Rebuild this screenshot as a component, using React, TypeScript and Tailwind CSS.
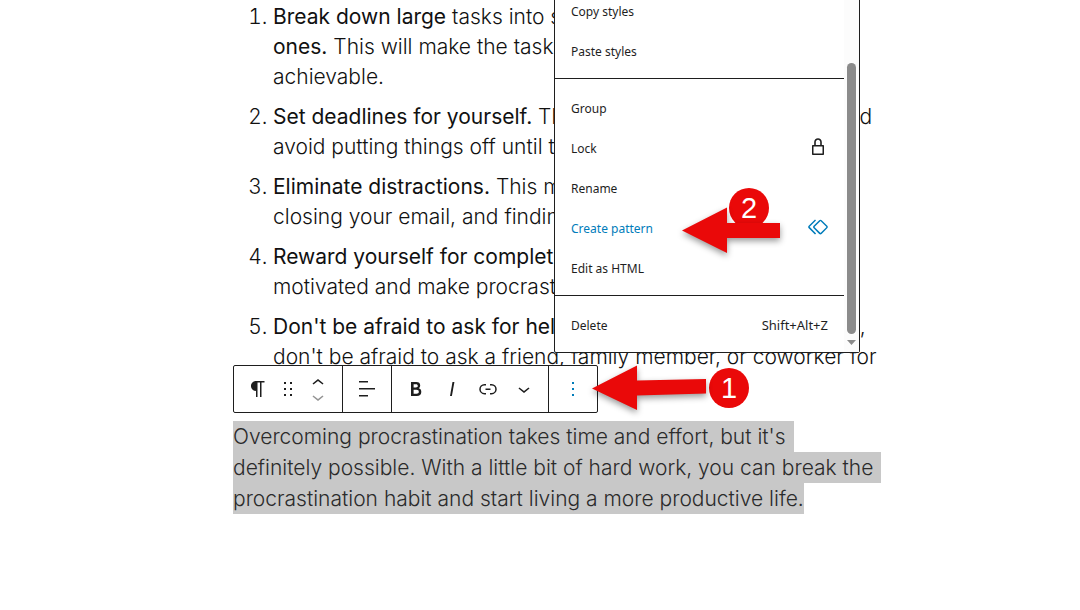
import React from "react";
import clsx from "clsx";

const icons = {
  paragraph:
    "m9.99609 14v-.2251l.00391.0001v6.225h1.5v-14.5h2.5v14.5h1.5v-14.5h3v-1.5h-8.50391c-2.76142 0-5 2.23858-5 5 0 2.7614 2.23858 5 5 5z",
  drag: "M8 7h2V5H8v2zm0 6h2v-2H8v2zm0 6h2v-2H8v2zm6-14v2h2V5h-2zm0 8h2v-2h-2v2zm0 6h2v-2h-2v2z",
  up: "M6.5 12.4L12 8l5.5 4.4-.9 1.2L12 10l-4.5 3.6-1-1.2z",
  down: "M17.5 11.6L12 16l-5.5-4.4.9-1.2L12 14l4.5-3.6 1 1.2z",
  align: "M13 5.5H4V4h9v1.5Zm7 7H4V11h16v1.5Zm-7 7H4V18h9v1.5Z",
  bold: "M14.7 11.3c1-.6 1.5-1.6 1.5-3 0-2.3-1.3-3.4-4-3.4H7v14h5.8c1.4 0 2.5-.3 3.3-1 .8-.7 1.2-1.7 1.2-2.9.1-1.9-.8-3.1-2.6-3.7zm-5.1-4h2.3c.6 0 1.1.1 1.4.4.3.3.5.7.5 1.2s-.2 1-.5 1.2c-.3.3-.8.4-1.4.4H9.6V7.3zm4.6 9c-.4.3-1 .4-1.7.4H9.6v-3.9h2.9c.7 0 1.3.2 1.7.5.4.3.6.8.6 1.5s-.2 1.2-.6 1.5z",
  italic: "M12.5 5L10 19h1.9l2.5-14z",
  link: "M10 17.389H8.444A5.194 5.194 0 1 1 8.444 7H10v1.5H8.444a3.694 3.694 0 0 0 0 7.389H10v1.5ZM14 7h1.556a5.194 5.194 0 0 1 0 10.39H14v-1.5h1.556a3.694 3.694 0 0 0 0-7.39H14V7Zm-4.5 6h5v-1.5h-5V13Z",
  more: "M13 19h-2v-2h2v2zm0-6h-2v-2h2v2zm0-6h-2V5h2v2z",
  lock: "M17 10h-1.2V7c0-2.1-1.7-3.8-3.8-3.8-2.1 0-3.8 1.7-3.8 3.8v3H7c-.6 0-1 .4-1 1v8c0 .6.4 1 1 1h10c.6 0 1-.4 1-1v-8c0-.6-.4-1-1-1zM9.8 7c0-1.2 1-2.2 2.2-2.2 1.2 0 2.2 1 2.2 2.2v3H9.8V7zm6.7 11.5h-9v-7h9v7z",
  pattern:
    "M21.3 10.8l-5.6-5.6c-.7-.7-1.8-.7-2.5 0l-5.6 5.6c-.7.7-.7 1.8 0 2.5l5.6 5.6c.3.3.8.5 1.2.5s.9-.2 1.2-.5l5.6-5.6c.8-.7.8-1.9.1-2.5zm-1 1.4l-5.6 5.6c-.1.1-.3.1-.4 0l-5.6-5.6c-.1-.1-.1-.3 0-.4l5.6-5.6s.1-.1.2-.1.1 0 .2.1l5.6 5.6c.1.1.1.3 0 .4zm-16.6-.4L10 5.5l-1-1-6.3 6.3c-.7.7-.7 1.8 0 2.5L9 19.5l1.1-1.1-6.3-6.3c-.2 0-.2-.2-.1-.3z",
};

type IconName = keyof typeof icons;

const Icon = ({ name }: { name: IconName }) => (
  <svg className="w-6 h-6 shrink-0" viewBox="0 0 24 24" fill="currentColor" aria-hidden="true">
    <path d={icons[name]} />
  </svg>
);

const ToolButton = ({ name, label, className }: { name: IconName; label: string; className?: string }) => (
  <button type="button" aria-label={label} className={clsx("flex items-center justify-center h-full", className)}>
    <Icon name={name} />
  </button>
);

const Toolbar = () => (
  <div
    role="toolbar"
    aria-label="Block tools"
    className="absolute left-0 top-[365px] flex h-12 bg-white border border-[#1e1e1e] rounded-xs text-[#1e1e1e] divide-x divide-[#1e1e1e]"
  >
    <div className="flex w-[109px] pl-3">
      <ToolButton name="paragraph" label="Paragraph" className="w-6" />
      <ToolButton name="drag" label="Drag" className="w-9" />
      <div className="flex flex-col w-6 h-full justify-center">
        <button type="button" aria-label="Move up" className="flex h-4 items-center justify-center">
          <Icon name="up" />
        </button>
        <button type="button" aria-label="Move down" className="flex h-3 items-center justify-center text-[#949494]">
          <Icon name="down" />
        </button>
      </div>
    </div>
    <ToolButton name="align" label="Align text" className="w-[49px]" />
    <div className="flex w-[157px] px-1.5">
      <ToolButton name="bold" label="Bold" className="w-9" />
      <ToolButton name="italic" label="Italic" className="w-9" />
      <ToolButton name="link" label="Link" className="w-9" />
      <ToolButton name="down" label="More" className="w-9" />
    </div>
    <ToolButton name="more" label="Options" className="w-12 text-[#007cba]" />
  </div>
);

type Item = { label: string; icon?: IconName; shortcut?: string; active?: boolean };

const groups: Item[][] = [
  [{ label: "Copy styles" }, { label: "Paste styles" }],
  [
    { label: "Group" },
    { label: "Lock", icon: "lock" },
    { label: "Rename" },
    { label: "Create pattern", icon: "pattern", active: true },
    { label: "Edit as HTML" },
  ],
  [{ label: "Delete", shortcut: "Shift+Alt+Z" }],
];

const OptionsMenu = () => (
  <div className="absolute left-[321px] -top-[19px] flex w-[306px] bg-white border border-[#1e1e1e] rounded-xs font-['Noto_Sans',sans-serif] font-normal text-[12px] text-[#1e1e1e]">
    <div role="menu" className="flex-1 divide-y divide-[#1e1e1e]">
      {groups.map((items, i) => (
        <div key={i} role="group" className="py-2">
          {items.map((item) => (
            <button
              key={item.label}
              type="button"
              role="menuitem"
              className={clsx("flex w-full h-10 items-center justify-between pl-4", item.icon ? "pr-3.5" : "pr-4", item.active && "text-[#007cba]")}
            >
              <span className="pt-[3px]">{item.label}</span>
              {item.icon && <Icon name={item.icon} />}
              {item.shortcut && <span className="pt-[3px] text-[13px]">{item.shortcut}</span>}
            </button>
          ))}
        </div>
      ))}
    </div>
    {/* scrollbar */}
    <div className="flex flex-col items-center w-[15px] pt-[81px] bg-[#fcfcfc]">
      <div className="w-[9px] h-[271px] rounded-full bg-[#8b8b8b]" />
      <svg className="w-[9px] h-[5px] mt-1.5" viewBox="0 0 9 5" fill="#8b8b8b" aria-hidden="true">
        <path d="M0 0h9L4.5 5z" />
      </svg>
    </div>
  </div>
);

const Badge = ({ children, className }: { children: React.ReactNode; className: string }) => (
  <span
    className={clsx(
      "absolute flex w-10 h-10 items-center justify-center rounded-full bg-[#ea0909] text-white text-[29px] leading-none font-['Liberation_Sans',sans-serif]",
      className
    )}
  >
    {children}
  </span>
);

const App = (): JSX.Element => {
  return (
    <main className="min-h-screen overflow-hidden bg-white pl-8 font-['Inter',sans-serif] font-light text-[#111]">
      <div className="relative mx-auto w-full max-w-[646px] pt-0.5">
        <ol className="list-decimal pl-10 space-y-[10px] text-[21px] leading-[30px] whitespace-nowrap">
          <li>
            <strong className="font-normal">Break down large</strong> tasks into smaller, more
            <br />
            <strong className="font-normal">ones.</strong> This will make the task seem less
            <br />
            achievable.
          </li>
          <li>
            <strong className="font-normal">Set deadlines for yourself.</strong> This will help you stay on task and
            <br />
            avoid putting things off until the last minute.
          </li>
          <li>
            <strong className="font-normal">Eliminate distractions.</strong> This means your phone,
            <br />
            closing your email, and finding a quiet place.
          </li>
          <li>
            <strong className="font-normal">Reward yourself for completing tasks.</strong> Stay
            <br />
            motivated and make procrastination less likely.
          </li>
          <li>
            <strong className="font-normal">Don't be afraid to ask for help.</strong> If you're struggling to decide,
            <br />
            don't be afraid to ask a friend, family member, or coworker for
            <br />
            help.
          </li>
        </ol>

        <p className="mt-[19px] text-[21px] leading-[31px] text-[#2b2b2b] whitespace-nowrap">
          <span className="block w-fit pr-2 bg-[#c8c8c8]">Overcoming procrastination takes time and effort, but it's</span>
          <span className="block w-fit pr-2 bg-[#c8c8c8]">definitely possible. With a little bit of hard work, you can break the</span>
          <span className="block w-fit bg-[#c8c8c8]">procrastination habit and start living a more productive life.</span>
        </p>

        <OptionsMenu />
        <Toolbar />

        {/* step markers */}
        <Badge className="left-[476px] top-[368px]">1</Badge>
        <svg className="absolute left-[355px] top-[360px] w-[122px] h-[60px] drop-shadow-[0_3px_3px_rgba(0,0,0,0.4)]" viewBox="0 0 122 60" fill="#ea0909" aria-hidden="true">
          <path d="M4 28.5L49 5.5V20.5L118 19V33.5L49 35.5V50z" />
        </svg>
        <Badge className="left-[496px] top-[188px]">2</Badge>
        <svg className="absolute left-[445px] top-[200px] w-[106px] h-[60px] drop-shadow-[0_3px_3px_rgba(0,0,0,0.4)]" viewBox="0 0 106 60" fill="#ea0909" aria-hidden="true">
          <path d="M4 30.5L49 7.5V23H102V38H49V53z" />
        </svg>
      </div>
    </main>
  );
};

export default App;
